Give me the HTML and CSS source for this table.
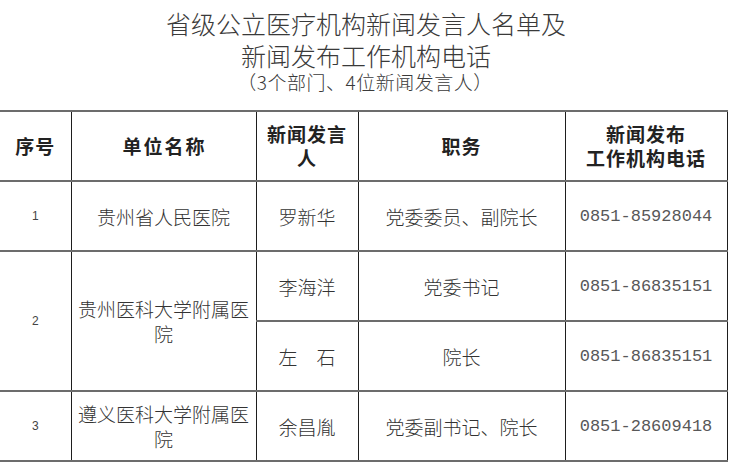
FILE: index.html
```html
<!DOCTYPE html>
<html lang="zh-CN">
<head>
<meta charset="utf-8">
<title>省级公立医疗机构新闻发言人名单</title>
<link rel="stylesheet" href="styles.css">
</head>
<body>
<div class="page">
  <header class="title">
    <div class="title-main">省级公立医疗机构新闻发言人名单及</div>
    <div class="title-main">新闻发布工作机构电话</div>
    <div class="title-sub">（3个部门、4位新闻发言人）</div>
  </header>
  <table class="roster">
    <colgroup>
      <col class="c-no">
      <col class="c-unit">
      <col class="c-name">
      <col class="c-post">
      <col class="c-tel">
    </colgroup>
    <thead>
      <tr>
        <th class="first">序号</th>
        <th><span class="spaced">单位名称</span></th>
        <th>新闻发言<br>人</th>
        <th>职务</th>
        <th>新闻发布<br>工作机构电话</th>
      </tr>
    </thead>
    <tbody>
      <tr>
        <td class="first num">1</td>
        <td>贵州省人民医院</td>
        <td>罗新华</td>
        <td>党委委员、副院长</td>
        <td class="tel">0851-85928044</td>
      </tr>
      <tr>
        <td class="first num" rowspan="2">2</td>
        <td rowspan="2" class="unit2">贵州医科大学附属医<br>院</td>
        <td>李海洋</td>
        <td>党委书记</td>
        <td class="tel">0851-86835151</td>
      </tr>
      <tr>
        <td>左　石</td>
        <td>院长</td>
        <td class="tel">0851-86835151</td>
      </tr>
      <tr>
        <td class="first num">3</td>
        <td class="unit2">遵义医科大学附属医<br>院</td>
        <td>余昌胤</td>
        <td>党委副书记、院长</td>
        <td class="tel">0851-28609418</td>
      </tr>
    </tbody>
  </table>
</div>
</body>
</html>
```

FILE: styles.css
```css
html, body {
  margin: 0;
  padding: 0;
  background: #ffffff;
}

.page {
  width: 730px;
  height: 462px;
  overflow: hidden;
  font-family: "Noto Sans CJK SC", "Noto Sans", sans-serif;
  color: #333333;
}

.title {
  display: flex;
  flex-direction: column;
  align-items: center;
  padding-top: 7px;
  height: 103px;
  box-sizing: content-box;
}

.title-main {
  font-size: 25px;
  line-height: 32px;
  font-weight: 300;
  color: #3a3a3a;
  padding-left: 2px;
}

.title-sub {
  font-size: 19px;
  line-height: 20px;
  font-weight: 300;
  color: #3a3a3a;
  letter-spacing: 0.5px;
  margin-top: 1px;
}

.roster {
  border-collapse: collapse;
  table-layout: fixed;
  width: 727px;
}

.c-no { width: 71px; }
.c-unit { width: 185px; }
.c-name { width: 102px; }
.c-post { width: 207px; }
.c-tel { width: 162px; }

.roster th,
.roster td {
  height: 68px;
  padding: 0;
  text-align: center;
  vertical-align: middle;
  border-top: 2px solid #6c6c6c;
  border-bottom: 2px solid #6c6c6c;
  border-left: 1px solid #1e1e1e;
  border-right: 1px solid #1e1e1e;
}

.roster .first {
  border-left: none;
}

.roster th {
  font-size: 19px;
  line-height: 24px;
  font-weight: 700;
  color: #222222;
  letter-spacing: 1px;
}

.spaced {
  letter-spacing: 2px;
  margin-right: -2px;
}

.roster td {
  font-size: 19px;
  line-height: 25px;
  font-weight: 300;
  color: #333333;
}

.roster td.num {
  font-family: "Liberation Sans", sans-serif;
  font-size: 12px;
  color: #444444;
}

.roster td.tel {
  font-family: "Liberation Mono", "DejaVu Sans Mono", monospace;
  font-size: 17px;
  color: #585858;
}
```
